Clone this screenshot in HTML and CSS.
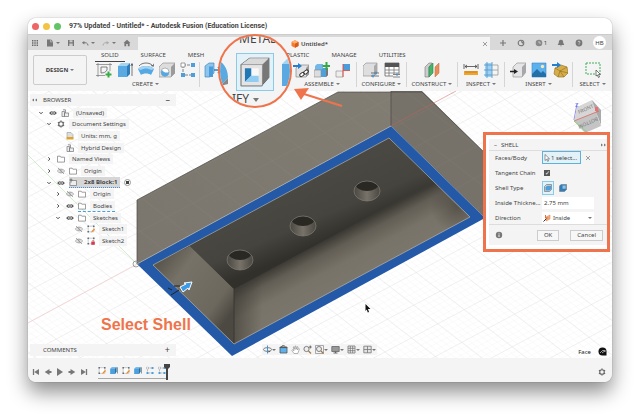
FILE: index.html
```html
<!DOCTYPE html>
<html lang="en">
<head>
  <meta charset="UTF-8">
  <meta name="viewport" content="width=device-width, initial-scale=1.0">
  <title>Autodesk Fusion</title>
  <link rel="stylesheet" href="styles.css">
</head>
<body>
  <!-- icon sprite -->
  <svg class="sprite" aria-hidden="true">
    <symbol id="apps" viewBox="0 0 8 8"><path d="M1 1h1.400v1.400H1zM3.300 1h1.400v1.400H3.300zM5.600 1H7v1.400H5.600zM1 3.300h1.400v1.400H1zM3.300 3.300h1.400v1.400H3.300zM5.600 3.300H7v1.400H5.600zM1 5.600h1.400V7H1zM3.300 5.600h1.400V7H3.300zM5.600 5.600H7V7H5.600z" fill="#666"/></symbol>
    <symbol id="file" viewBox="0 0 8 8"><path d="M1 .5h4l2 2v5H1z" fill="#777"/><path d="M4.6.8v2.1h2" fill="none" stroke="#ddd" stroke-width=".6"/></symbol>
    <symbol id="save" viewBox="0 0 8 8"><path d="M1 1h6v6H1z" fill="#777"/><path d="M2.5 1.2h3v2h-3zM2.3 4.6h3.4V7H2.3z" fill="#ccc"/></symbol>
    <symbol id="undo" viewBox="0 0 8 8"><path d="M7 6.5C7 4 5 3.5 2 3.7" fill="none" stroke="#777"/><path d="M.8 3.8 3.4 2v3.5z" fill="#777"/></symbol>
    <symbol id="redo" viewBox="0 0 8 8"><path d="M1 6.5C1 4 3 3.5 6 3.7" fill="none" stroke="#aaa"/><path d="M7.2 3.8 4.6 2v3.5z" fill="#aaa"/></symbol>
    <symbol id="home" viewBox="0 0 8 8"><path d="M4 .8 7.5 4H6.6v3.2H4.8V5H3.2v2.2H1.4V4H.5z" fill="#777"/></symbol>
    <symbol id="doc" viewBox="0 0 8 8"><path d="M4 .3 7.5 2v4L4 7.8.5 6V2z" fill="#f47b2c"/><path d="M4 .3 7.5 2 4 3.8.5 2z" fill="#ffb071"/><path d="M4 3.8V7.8l3.5-1.8V2z" fill="#d8591b"/></symbol>
    <symbol id="close" viewBox="0 0 8 8"><path d="M2 2l4 4M6 2 2 6" stroke="#777" stroke-width=".7"/></symbol>
    <symbol id="plus" viewBox="0 0 8 8"><path d="M4 1v6M1 4h6" stroke="#777" stroke-width="1.2"/></symbol>
    <symbol id="ext" viewBox="0 0 8 8"><circle cx="4" cy="4" r="2.8" fill="none" stroke="#777" stroke-width="1.1"/><path d="M3.5 1.5 6 3v2L4.5 3.6z" fill="#777"/></symbol>
    <symbol id="clock" viewBox="0 0 8 8"><circle cx="4" cy="4" r="3.3" fill="#888"/><path d="M4 2v2h2" fill="none" stroke="#ddd" stroke-width=".7"/></symbol>
    <symbol id="bell" viewBox="0 0 8 8"><path d="M4 .7c2 0 2.2 1.5 2.2 3L7.3 6H.7l1.1-2.3c0-1.500.2-3 2.2-3z" fill="#777"/><path d="M3 6.500h2L4 7.500z" fill="#777"/></symbol>
    <symbol id="help" viewBox="0 0 8 8"><circle cx="4" cy="4" r="3.4" fill="#777"/><path d="M3 3.2c0-1.500 2-1.300 2 0 0 .7-1 .7-1 1.500M4 5.400v.7" fill="none" stroke="#ddd" stroke-width=".8"/></symbol>

    <symbol id="sketch" viewBox="0 0 16 16"><path d="M2 1v14M14 1v8M0 2.500h16M0 13.500h9" stroke="#777" stroke-width=".7"/><path d="M5 5v6c3 0 5-1 6-3V5z" fill="none" stroke="#666" stroke-width=".8"/><path d="M12.500 9.500v6M9.500 12.500h6" stroke="#3aaa48" stroke-width="2"/></symbol>
    <symbol id="extrude" viewBox="0 0 16 16"><path d="M1 4 4 1h9l-3 3z" fill="#a5d3f2"/><path d="M1 4h9v11H1z" fill="#5aa9e0"/><path d="m10 4 3-3v11l-3 3z" fill="#2f7dbb"/><path d="M15 14V2m-1.200 2L15 1.500 16 4" stroke="#444" stroke-width=".7" fill="none"/></symbol>
    <symbol id="revolve" viewBox="0 0 16 16"><path d="M0 7c3-4 13-4 16 0l-3 6c-2-2-8-2-10 0z" fill="#56a8e2"/><path d="M0 7c3-4 13-4 16 0l-3 1c-3-2-7-2-10 0z" fill="#a5d3f2"/><path d="M1 4c3-4 11-4 14 0M13 3.500l2.500.8.200-2.500" fill="none" stroke="#555" stroke-width=".8"/></symbol>
    <symbol id="hole" viewBox="0 0 16 16"><path d="M0 5 4 1h12v10l-4 4H0z" fill="#ddd" stroke="#888" stroke-width=".6"/><path d="m12 5 4-4v10l-4 4z" fill="#9b9b9b"/><circle cx="6" cy="10" r="4" fill="#fff" stroke="#888" stroke-width=".6"/><path d="M3 8a4 4 0 1 0 7 2c-2 1-5 1-7-2z" fill="#56a8e2"/></symbol>
    <symbol id="pattern" viewBox="0 0 16 16"><path d="M3 3h10M3 3v10h10" fill="none" stroke="#666" stroke-width=".8" stroke-dasharray="3 1"/><path d="M11 1h4v4h-4zM1 11h4v4H1zM11 11h4v4h-4z" fill="#4aa0df"/><path d="M1 1h4v4H1z" fill="#fff" stroke="#777" stroke-width=".7"/></symbol>
    <symbol id="presspull" viewBox="0 0 16 16"><path d="M1 4 5 1h5v10l-4 4H1z" fill="#8dc5ec" stroke="#2f7dbb" stroke-width=".6"/><path d="M5 4.500h4V15H5z" fill="#4a9dda"/><path d="M10 8h6m-2-3 2.500 3L14 11" fill="none" stroke="#2f7dbb" stroke-width="1.400"/></symbol>
    <symbol id="fillet" viewBox="0 0 16 16"><path d="M1 6 5 1c7 0 10 5 10 10l-4 4C11 10 7 6 1 6z" fill="#5aa9e0"/><path d="M1 6c6 0 10 4 10 9H1z" fill="#ddd"/><path d="m11 15 4-4v3z" fill="#888"/></symbol>
    <symbol id="shell" viewBox="0 0 32 32"><path d="M3 9 11 3h18v18l-7 8H3z" fill="#eee" stroke="#555" stroke-width="1"/><path d="M3 9 11 3h18l-6 6z" fill="#d9d9d9"/><path d="m23 9 6-6v18l-7 8z" fill="#777"/><path d="M3 9h20v20H3z" fill="#e4e4e4" stroke="#777" stroke-width=".6"/><path d="M6.500 12.500h13v13h-13z" fill="#f8f8f8"/><path d="M6.500 12.500h6v7l-6 6z" fill="#2277b5"/><path d="m12.500 19.500 7 0v6h-13z" fill="#91cdf2"/></symbol>
    <symbol id="insertc" viewBox="0 0 16 16"><path d="M3 6 6 3h10v9l-3 3H3z" fill="#e2e2e2" stroke="#777" stroke-width=".6"/><path d="m13 6 3-3v9l-3 3z" fill="#999"/><path d="M0 3h5V1l4 3-4 3V5H0z" fill="#257fd0"/><path d="M8 13.500 14 9" stroke="#fff" stroke-width="4"/><rect x="6.500" y="11" width="5" height="3" rx="1.500" fill="none" stroke="#333" transform="rotate(-35 9 12.500)"/><rect x="10.500" y="8.500" width="5" height="3" rx="1.500" fill="none" stroke="#333" transform="rotate(-35 13 10)"/></symbol>
    <symbol id="newcomp" viewBox="0 0 16 16"><path d="M1 4 3 2h6v6H1z" fill="#73b8e8"/><path d="M0 8h7v7H0z" fill="#ddd" stroke="#777" stroke-width=".5"/><path d="M7 8 9 6h5v7l-2 2H7z" fill="#4f9fd9"/><path d="m12 8 2-2v7l-2 2z" fill="#777"/><path d="M12.500 0v8M8.500 4h8" stroke="#37a847" stroke-width="2"/></symbol>
    <symbol id="joint" viewBox="0 0 16 16"><path d="M8 2h7v6H8z" fill="#4a9dda"/><path d="M1 9h7v6H1z" fill="#eee" stroke="#888" stroke-width=".6"/><path d="M8 15V2M8 8.500h7" stroke="#e04a3f" stroke-width=".9"/></symbol>
    <symbol id="config" viewBox="0 0 16 16"><path d="M0 4 3 1h11v10l-3 3H0z" fill="#dedede" stroke="#888" stroke-width=".6"/><path d="m11 4 3-3v10l-3 3z" fill="#aaa"/><path d="M8 11h8M8 14h8" stroke="#555" stroke-width=".8"/><path d="M13 9.500v3M10 12.500v3" stroke="#3f94d6" stroke-width="1.200"/></symbol>
    <symbol id="table" viewBox="0 0 16 16"><path d="M1 1h14v13H1z" fill="#fff" stroke="#666" stroke-width=".8"/><path d="M1 1h14v4H1z" fill="#555"/><path d="M1 8h14M1 11h14M5 5v9M10 5v9" stroke="#777" stroke-width=".8"/><path d="M9 12h7v4H9z" fill="#f4f4f4"/><path d="M9 12.500h7M9 15h7" stroke="#555" stroke-width=".7"/><path d="M13 11v3" stroke="#3f94d6"/></symbol>
    <symbol id="plane" viewBox="0 0 16 16"><path d="M1 5 5 1h3L5 5v10H1z" fill="#ccc" stroke="#777" stroke-width=".6"/><path d="m5 5 4-4v10l-4 4z" fill="#45b667" stroke="#2c8347" stroke-width=".6"/><path d="m11 5 4-4v10l-4 4z" fill="#e98d5b" stroke="#b9683c" stroke-width=".5"/></symbol>
    <symbol id="measure" viewBox="0 0 16 16"><path d="M1 2v5M15 2v5M2 4.500h12M4 3 2 4.500 4 6M12 3l2 1.500L12 6" fill="none" stroke="#444" stroke-width=".8"/><path d="M1 9h14v4H1z" fill="#f0a42d"/><path d="M3 9v2M5 9v2M7 9v2M9 9v2M11 9v2M13 9v2" stroke="#a76a0e" stroke-width=".6"/></symbol>
    <symbol id="interf" viewBox="0 0 16 16"><path d="M1 1h7v14H1z" fill="#9dd0f3"/><path d="M3 0v16M8 0v16M0 3h8M0 8h8M0 13h8" fill="none" stroke="#5a9bc9" stroke-width=".9"/><path d="M8 3h6v10H8M8 8h6" fill="none" stroke="#999" stroke-width=".8"/></symbol>
    <symbol id="derive" viewBox="0 0 16 16"><path d="M3 5 7 1h9v9l-4 5H3z" fill="#e5e5e8" stroke="#888" stroke-width=".6"/><path d="m12 5 4-4v9l-4 5z" fill="#a6a6ac"/><path d="M0 9.500h5" stroke="#222" stroke-width="1.500"/><path d="m4 7 4 2.500L4 12z" fill="#222"/></symbol>
    <symbol id="image" viewBox="0 0 16 16"><path d="M1 1h14v14H1z" fill="#5bb1ed" stroke="#3687c6" stroke-width=".6"/><path d="m1 12 5-5 4 4 2-2 3 3v3H1z" fill="#256fa8"/><circle cx="11.500" cy="4.500" r="1.700" fill="#ffe7b0"/></symbol>
    <symbol id="mesh" viewBox="0 0 16 16"><path d="m3 6 6-3 6 2 1 6-4 4H6l-4-3z" fill="#d6ae49" stroke="#8f6d1c" stroke-width=".6"/><path d="m3 6 5 3 7-4M8 9l-2 6M8 9l4 6M8 9l8 2" fill="none" stroke="#8f6d1c" stroke-width=".6"/><path d="M0 2h5V0l4 3-4 3V4H0z" fill="#257fd0"/></symbol>
    <symbol id="select" viewBox="0 0 16 16"><path d="M1 1h14v11H1z" fill="none" stroke="#45ad5d" stroke-dasharray="2 1"/><path d="m11 8 4.500 4.500h-2l1 2.500-1 .5-1.200-2.500-1.300 1z" fill="#fff" stroke="#444" stroke-width=".7"/></symbol>

    <symbol id="eye" viewBox="0 0 8 8"><path d="M.2 4C2 1.200 6 1.200 7.800 4 6 6.800 2 6.800.2 4z" fill="#555"/><circle cx="4" cy="4" r="1.400" fill="#555" stroke="#fff" stroke-width=".7"/></symbol>
    <symbol id="hidden" viewBox="0 0 8 8"><path d="M.3 4C2 1.500 6 1.500 7.700 4 6 6.500 2 6.500.3 4zM1 1l6 6" fill="none" stroke="#888" stroke-width=".7"/><circle cx="4" cy="4" r="1.200" fill="none" stroke="#888" stroke-width=".6"/></symbol>
    <symbol id="down" viewBox="0 0 8 8"><path d="m2.300 3 1.700 1.800L5.700 3" fill="none" stroke="#555"/></symbol>
    <symbol id="right" viewBox="0 0 8 8"><path d="m3.200 2.300 1.800 1.700-1.800 1.700" fill="none" stroke="#555"/></symbol>
    <symbol id="collapse" viewBox="0 0 8 8"><path d="M4 2.500v3L2 4zM7 2.500v3L5 4z" fill="#777"/></symbol>
    <symbol id="expand" viewBox="0 0 8 8"><path d="M2 2.500v3L4 4zM5 2.500v3L7 4z" fill="#777"/></symbol>
    <symbol id="folder" viewBox="0 0 8 8"><path d="M.5 1.200h2.700l.6 1h3.700v4.900h-7z" fill="#fff" stroke="#777" stroke-width=".7"/></symbol>
    <symbol id="gear" viewBox="0 0 8 8"><circle cx="4" cy="4" r="2.300" fill="none" stroke="#666" stroke-width="1.100"/><path d="M4 .4v1.200M4 6.400v1.200M.9 2.200l1 .6M6.100 5.200l1 .6M.9 5.800l1-.6M6.100 2.800l1-.6" stroke="#666" stroke-width="1.300"/></symbol>
    <symbol id="asm" viewBox="0 0 8 8"><path d="M1 2.500h2.500v5H1zM3.500 4h4v3.500h-4zM2 .8h2.500V4" fill="#eee" stroke="#777" stroke-width=".7"/></symbol>
    <symbol id="units" viewBox="0 0 8 8"><path d="M1 .5h4l2 2v3H1z" fill="#ddd" stroke="#888" stroke-width=".5"/><path d="M.5 5h7v2.500h-7z" fill="#dca42d"/></symbol>
    <symbol id="comp" viewBox="0 0 8 8"><path d="M2.500 2.500h5v5H1V4" fill="#eee" stroke="#777" stroke-width=".7"/><path d="M2 .5v4M.5 2h3" stroke="#555" stroke-width=".8"/></symbol>
    <symbol id="sk1" viewBox="0 0 8 8"><path d="M1.200 1.200h5.600v5.600H1.200z" fill="#fff" stroke="#999" stroke-width=".5"/><path d="M.5.5h1.400v1.400H.5zM6.100.5h1.400v1.400H6.100zM.5 6.100h1.400v1.400H.5z" fill="#57656f"/><path d="m4.300 7.500.5-1.700 2.400-2.300.8.900-2.300 2.400z" fill="#f28a26"/></symbol>
    <symbol id="sk2" viewBox="0 0 8 8"><path d="M1.200 1.200h5.600v5.600H1.200z" fill="#fff" stroke="#999" stroke-width=".5"/><path d="M.5.5h1.400v1.400H.5zM6.100.5h1.400v1.400H6.100zM.5 6.100h1.400v1.400H.5z" fill="#57656f"/><path d="M4.300 4.800h3.500v3H4.300z" fill="#d33b4b"/><path d="M5 4.800c0-1.800 2-1.800 2 0" fill="none" stroke="#d33b4b" stroke-width=".7"/></symbol>
    <symbol id="box" viewBox="0 0 8 8"><path d="m.3 2.200 1.500-1.700h4.700v4.800L5 7.500H.3z" fill="#7cbdeb"/><path d="M.3 2.200H5v5.300H.3z" fill="#4c9fdc"/><path d="m5 2.200 1.500-1.700v4.800L5 7.500z" fill="#27709f"/><path d="M7.500.8V7" stroke="#555" stroke-width=".6"/></symbol>
    <symbol id="sharp" viewBox="0 0 8 8"><path d="m.5 2.500 2-2h5v5l-2 2h-5z" fill="#d4d4d4" stroke="#666" stroke-width=".6"/><path d="m1.500 3.200 1.500-1.500h4v3.500L5.500 6.500h-4z" fill="#4c9fdc"/></symbol>
    <symbol id="round" viewBox="0 0 8 8"><path d="M.5 2.500C1 .8 2 .5 3 .5h4.500v5l-2 2h-5z" fill="#2f7dbb" stroke="#777" stroke-width=".6"/><path d="M3.500 1.500h3.200v3.200H3.500z" fill="#8dc5ec"/></symbol>
    <symbol id="info" viewBox="0 0 8 8"><circle cx="4" cy="4" r="3.200" fill="#777"/><path d="M4 3.500V6M4 1.900v.8" stroke="#fff" stroke-width=".9"/></symbol>
    <symbol id="cursor" viewBox="0 0 8 8"><path d="m2 .5 4.500 4.300H4.600L5.600 7l-1 .4-.9-2.200L2 6.500z" fill="#fff" stroke="#555" stroke-width=".6"/></symbol>
    <symbol id="inside" viewBox="0 0 8 8"><path d="M3 3 7 1v4L3 7z" fill="#f2b28b" stroke="#d9783f" stroke-width=".5"/><path d="m.5 7.500 3-3" stroke="#333"/><path d="M2.500 1v3h3" stroke="#e0703a" fill="none"/></symbol>

    <symbol id="orbit" viewBox="0 0 9 9"><ellipse cx="4.500" cy="4.500" rx="4" ry="1.900" fill="none" stroke="#666" stroke-width=".8"/><path d="M4.500.5v8" stroke="#3f94d6"/><path d="m5.500 5.500 2 1-2 1z" fill="#555"/></symbol>
    <symbol id="look" viewBox="0 0 9 9"><path d="M1 2h7v6H1z" fill="#5db2ee" stroke="#555" stroke-width=".8"/><path d="M2.500 2c0-1.800 3-1.800 4 0M.8 2.600h7.400" stroke="#555" fill="none"/></symbol>
    <symbol id="hand" viewBox="0 0 9 9"><path d="M3 8.500.8 5.300l.7-.6L3 5.800 2.200 2l.8-.2 1 2.600V1h.9l.3 3.300L6.200 1.600l.8.300-.5 3 1.200-1.500.7.500L6.800 8.500z" fill="#fff" stroke="#888" stroke-width=".6"/></symbol>
    <symbol id="zoom" viewBox="0 0 9 9"><circle cx="3.500" cy="4" r="2.600" fill="#eee" stroke="#666" stroke-width=".8"/><path d="m5.500 6 2.500 2.500" stroke="#a87640" stroke-width="1.200"/><path d="M7.300.5v3M5.800 2h3" stroke="#444" stroke-width=".7"/></symbol>
    <symbol id="fit" viewBox="0 0 9 9"><path d="M.5.500h8v8h-8z" fill="none" stroke="#888" stroke-width=".7"/><circle cx="4" cy="4" r="2.500" fill="#eee" stroke="#666" stroke-width=".8"/><path d="M6 6l2.500 2.500" stroke="#a87640" stroke-width="1.200"/></symbol>
    <symbol id="screen" viewBox="0 0 9 9"><path d="M.8 1.500h7.400v5H.8z" fill="#999" stroke="#666" stroke-width=".8"/><path d="M4.500 6.500V8M2.500 8h4" stroke="#666"/></symbol>
    <symbol id="grid" viewBox="0 0 9 9"><path d="M1 1h7v7H1zM1 3.300h7M1 5.700h7M3.300 1v7M5.700 1v7" fill="none" stroke="#777" stroke-width=".8"/></symbol>
    <symbol id="views" viewBox="0 0 9 9"><path d="M.8 1.200h7.400v6.600H.8zM.8 4.500h7.400M4.500 1.200v6.600" fill="#e4e4e4" stroke="#777" stroke-width=".8"/></symbol>

    <symbol id="first" viewBox="0 0 8 8"><path d="M1.500 1v6" stroke="#777" stroke-width="1.300"/><path d="M7 1v6L2.200 4z" fill="#777"/></symbol>
    <symbol id="prev" viewBox="0 0 8 8"><path d="M5.500 1v6L.7 4z" fill="#777"/><path d="M5 4h2.500" stroke="#777" stroke-width="2"/></symbol>
    <symbol id="play" viewBox="0 0 8 8"><path d="M1 0v8l6-4z" fill="#777"/></symbol>
    <symbol id="next" viewBox="0 0 8 8"><path d="M2.500 1v6l4.800-3z" fill="#777"/><path d="M3 4H.5" stroke="#777" stroke-width="2"/></symbol>
    <symbol id="last" viewBox="0 0 8 8"><path d="M6.500 1v6" stroke="#777" stroke-width="1.300"/><path d="M1 1v6l4.800-3z" fill="#777"/></symbol>
  </svg>

  <div class="window">
    <header class="titlebar">
      <span class="light red"></span><span class="light yellow"></span><span class="light green"></span>
      <h1 class="title">97% Updated - Untitled* - Autodesk Fusion (Education License)</h1>
    </header>

    <div class="tabbar">
      <div class="quick">
        <button class="ico" aria-label="Data panel"><svg><use href="#apps"/></svg></button>
        <button class="ico menu" aria-label="File"><svg><use href="#file"/></svg></button>
        <button class="ico" aria-label="Save"><svg><use href="#save"/></svg></button>
        <button class="ico menu" aria-label="Undo"><svg><use href="#undo"/></svg></button>
        <button class="ico menu" aria-label="Redo"><svg><use href="#redo"/></svg></button>
        <button class="ico" aria-label="Home"><svg><use href="#home"/></svg></button>
      </div>
      <div class="doctab">
        <span class="docname"><svg class="i8"><use href="#doc"/></svg>Untitled*</span>
        <button class="ico" aria-label="Close tab"><svg><use href="#close"/></svg></button>
      </div>
      <div class="account">
        <button class="ico" aria-label="New design"><svg><use href="#plus"/></svg></button>
        <button class="ico" aria-label="Extensions"><svg><use href="#ext"/></svg></button>
        <button class="ico jobs"><svg><use href="#clock"/></svg>1</button>
        <button class="ico" aria-label="Notifications"><svg><use href="#bell"/></svg></button>
        <button class="ico" aria-label="Help"><svg><use href="#help"/></svg></button>
        <button class="avatar">HB</button>
      </div>
    </div>

    <div class="ribbon">
      <button class="workspace menu">DESIGN</button>
      <div class="tools">
        <nav class="modes">
          <a href="#" class="active">SOLID</a>
          <a href="#">SURFACE</a>
          <a href="#">MESH</a>
          <a href="#">SHEET METAL</a>
          <a href="#">PLASTIC</a>
          <a href="#">MANAGE</a>
          <a href="#">UTILITIES</a>
        </nav>
        <div class="groups">
          <div class="group">
            <div class="icons"><svg><use href="#sketch"/></svg><svg><use href="#extrude"/></svg><svg><use href="#revolve"/></svg><svg><use href="#hole"/></svg><svg><use href="#pattern"/></svg></div>
            <button class="menu">CREATE</button>
          </div>
          <div class="group">
            <div class="icons"><svg><use href="#presspull"/></svg><svg><use href="#fillet"/></svg><svg><use href="#shell"/></svg><svg><use href="#extrude"/></svg></div>
            <button class="menu">MODIFY</button>
          </div>
          <div class="group">
            <div class="icons"><svg><use href="#insertc"/></svg><svg><use href="#newcomp"/></svg><svg><use href="#joint"/></svg></div>
            <button class="menu">ASSEMBLE</button>
          </div>
          <div class="group">
            <div class="icons"><svg><use href="#config"/></svg><svg><use href="#table"/></svg></div>
            <button class="menu">CONFIGURE</button>
          </div>
          <div class="group">
            <div class="icons"><svg><use href="#plane"/></svg></div>
            <button class="menu">CONSTRUCT</button>
          </div>
          <div class="group">
            <div class="icons"><svg><use href="#measure"/></svg><svg><use href="#interf"/></svg></div>
            <button class="menu">INSPECT</button>
          </div>
          <div class="group">
            <div class="icons"><svg><use href="#derive"/></svg><svg><use href="#image"/></svg><svg><use href="#mesh"/></svg></div>
            <button class="menu">INSERT</button>
          </div>
          <div class="group">
            <div class="icons"><svg><use href="#select"/></svg></div>
            <button class="menu">SELECT</button>
          </div>
        </div>
      </div>
    </div>

    <main class="viewport">
      <svg class="canvas" viewBox="28 91 584 267" preserveAspectRatio="xMidYMid slice">
        <defs>
          <pattern id="minor" width="6" height="6" patternUnits="userSpaceOnUse" patternTransform="matrix(.88 -.47 .8 .62 137 264)"><path d="M0 0h6M0 0v6" stroke="#ececec" stroke-width=".5"/></pattern>
          <pattern id="major" width="30" height="30" patternUnits="userSpaceOnUse" patternTransform="matrix(.88 -.47 .8 .62 137 264)"><path d="M0 0h30M0 0v30" stroke="#c9c9c9" stroke-width=".8"/></pattern>
          <linearGradient id="wall" x1="0" y1="1" x2="1" y2="0"><stop offset="0" stop-color="#7b766d"/><stop offset="1" stop-color="#817d73"/></linearGradient>
          <linearGradient id="floor" gradientUnits="userSpaceOnUse" x1="290" y1="190" x2="314" y2="246"><stop offset="0" stop-color="#4a4842"/><stop offset=".6" stop-color="#46443e"/><stop offset="1" stop-color="#32302b"/></linearGradient>
          <linearGradient id="near" gradientUnits="userSpaceOnUse" x1="334" y1="236" x2="356" y2="278"><stop offset="0" stop-color="#3c3a34"/><stop offset=".25" stop-color="#625e55"/><stop offset=".6" stop-color="#787368"/><stop offset="1" stop-color="#7b766b"/></linearGradient>
          <linearGradient id="side" gradientUnits="userSpaceOnUse" x1="160" y1="255" x2="234" y2="310"><stop offset="0" stop-color="#55524a"/><stop offset=".3" stop-color="#777267"/><stop offset=".8" stop-color="#6d685e"/><stop offset="1" stop-color="#4c4942"/></linearGradient>
          <linearGradient id="corner" gradientUnits="userSpaceOnUse" x1="234" y1="310" x2="262" y2="310"><stop offset="0" stop-color="#3c3a34" stop-opacity=".6"/><stop offset="1" stop-color="#3c3a34" stop-opacity="0"/></linearGradient>
          <radialGradient id="dim" gradientUnits="userSpaceOnUse" cx="458" cy="205" r="28"><stop offset="0" stop-color="#3c3a34" stop-opacity=".6"/><stop offset="1" stop-color="#3c3a34" stop-opacity="0"/></radialGradient>
          <linearGradient id="bore" x1="0" y1="0" x2="1" y2="0"><stop offset="0" stop-color="#4a4741"/><stop offset=".5" stop-color="#77736a"/><stop offset="1" stop-color="#4a4741"/></linearGradient>
          <clipPath id="rim"><ellipse rx="13" ry="10"/></clipPath>
          <g id="stud">
            <ellipse rx="13" ry="10" fill="url(#bore)"/>
            <g clip-path="url(#rim)"><ellipse cy="-8" rx="12" ry="8" fill="#2a2823"/></g>
            <ellipse rx="13" ry="10" fill="none" stroke="#8a867c" stroke-width=".6"/>
          </g>
        </defs>
        <path d="M28 91h584v267H28z" fill="#fff"/>
        <path d="M28 91h584v267H28z" fill="url(#minor)"/>
        <path d="M28 91h584v267H28z" fill="url(#major)" opacity=".5"/>
        <path d="M28 155 137 264" stroke="#bce8bc" stroke-width=".7"/>
        <path d="M28 323 137 264" stroke="#f6cccc" stroke-width=".7"/>
        <!-- outer walls -->
        <path d="M137 200 338 92l53 0v34L137 264z" fill="url(#wall)"/>
        <path d="M391 91h31l64 63v65l-95-93z" fill="#76726a"/>
        <path d="M137 264V200L338 92h84l64 62v64z" fill="url(#major)" opacity=".1"/>
        <path d="M137 264V200L338 92h84l64 62M391 91v35" fill="none" stroke="#4b4943" stroke-width=".7"/>
        <path d="M391 126 456 91" stroke="#c9605a" stroke-opacity=".7" stroke-width=".7"/>
        <!-- selected rim and cavity -->
        <path d="M137 264 391 126l94 92-253 138z" fill="#2459a8"/>
        <path d="M137 264 391 126" stroke="#b9b3a6" stroke-width=".7"/>
        <path d="M153 265 389 138l81 79-236 127z" fill="url(#near)"/>
        <path d="M234 289 300 253v56l-66 35z" fill="url(#corner)"/>
        <path d="M433 182 470 217 430 238 400 200z" fill="url(#dim)"/>
        <path d="M153 265 190 246l44 43v55z" fill="url(#side)"/>
        <path d="M190 246 389 138l44 44-199 107z" fill="url(#floor)"/>
        <path d="M234 289v55" stroke="#34322d" stroke-width=".8"/>
        <path d="M153 265 389 138l81 79-236 127z" fill="none" stroke="#b9b3a6" stroke-width=".7"/>
        <use href="#stud" x="240" y="260"/>
        <use href="#stud" x="303" y="226"/>
        <use href="#stud" x="367" y="191"/>
        <circle cx="136" cy="264" r="3" fill="none" stroke="#888" stroke-width=".8"/>
        <path d="m168 288 4 2M171 295l8-5M174 286h6" stroke="#222" stroke-width="1"/>
        <path d="m180 287 6-3-2-1 8-1-3 8-1-2-5 4z" fill="#3b9be8" stroke="#fff" stroke-width="1"/>
        <path d="m365.500 304 5 5h-2.500l1 3-1.200.5-1-3-1.300 1.500z" fill="#111"/>
        <!-- view cube -->
        <g>
          <path d="M574 120 577 104" stroke="#6b6bec" stroke-width=".8"/>
          <path d="m577 107 15-7 9 12-27 9z" fill="#d6d6d6"/>
          <path d="m574 121 22-9 5 14-16 7z" fill="#c4c4c4"/>
          <path d="m592 100 9 10v15l-5-13z" fill="#aaa"/>
          <path d="m574 121 25-10" stroke="#e05a50" stroke-width=".7"/>
          <path d="m574 121 14 12" stroke="#74cf74" stroke-width=".8"/>
          <text x="579" y="114" class="cube" transform="rotate(-24 579 114)">FRONT</text>
          <text x="597" y="117" class="cube" transform="rotate(156 597 117)">BOTTOM</text>
          <text x="575" y="107" class="axis">Z</text>
          <path d="M595 107h3v4h-3z" fill="#e87070"/>
        </g>
        <text x="101" y="330" class="caption">Select Shell</text>
      </svg>

      <aside class="left">
        <section>
          <h2 class="bar"><svg class="i8"><use href="#collapse"/></svg>BROWSER<span class="end">–</span></h2>
          <ul class="tree">
            <li><svg><use href="#down"/></svg><svg><use href="#eye"/></svg><svg><use href="#asm"/></svg><span>(Unsaved)</span></li>
            <li class="l1"><svg><use href="#down"/></svg><svg><use href="#gear"/></svg><span>Document Settings</span></li>
            <li class="l2"><svg></svg><svg><use href="#units"/></svg><span>Units: mm, g</span></li>
            <li class="l2"><svg></svg><svg><use href="#asm"/></svg><span>Hybrid Design</span></li>
            <li class="l1"><svg><use href="#right"/></svg><svg><use href="#folder"/></svg><span>Named Views</span></li>
            <li class="l1"><svg><use href="#right"/></svg><svg><use href="#hidden"/></svg><svg><use href="#folder"/></svg><span>Origin</span></li>
            <li class="l1"><svg><use href="#down"/></svg><svg><use href="#eye"/></svg><b class="current"><svg><use href="#comp"/></svg><span>2x8 Block:1</span></b><input type="radio" checked aria-label="Activate component"></li>
            <li class="l2"><svg><use href="#right"/></svg><svg><use href="#hidden"/></svg><svg><use href="#folder"/></svg><span>Origin</span></li>
            <li class="l2"><svg><use href="#right"/></svg><svg><use href="#eye"/></svg><b class="marked"><svg><use href="#folder"/></svg><span>Bodies</span></b></li>
            <li class="l2"><svg><use href="#down"/></svg><svg><use href="#eye"/></svg><svg><use href="#folder"/></svg><span>Sketches</span></li>
            <li class="l3"><svg></svg><svg><use href="#hidden"/></svg><svg><use href="#sk1"/></svg><span>Sketch1</span></li>
            <li class="l3"><svg></svg><svg><use href="#hidden"/></svg><svg><use href="#sk2"/></svg><span>Sketch2</span></li>
          </ul>
        </section>
        <h2 class="bar comments">COMMENTS<span class="end">+</span></h2>
      </aside>

      <div class="navbar">
        <button class="menu" aria-label="Orbit"><svg><use href="#orbit"/></svg></button>
        <button aria-label="Look at"><svg><use href="#look"/></svg></button>
        <button aria-label="Pan"><svg><use href="#hand"/></svg></button>
        <button aria-label="Zoom"><svg><use href="#zoom"/></svg></button>
        <button class="menu" aria-label="Fit"><svg><use href="#fit"/></svg></button>
        <button class="menu" aria-label="Display settings"><svg><use href="#screen"/></svg></button>
        <button class="menu" aria-label="Grid and snaps"><svg><use href="#grid"/></svg></button>
        <button class="menu" aria-label="Viewports"><svg><use href="#views"/></svg></button>
      </div>

      <div class="status">
        Face
        <svg viewBox="0 0 9 9"><path d="M4.500.5a4 4 0 1 0 0 8h4v-4a4 4 0 0 0-4-4z" fill="#111"/><path d="m2 6 2.500-2.500h3M4 6l2-1.500h1.500" fill="none" stroke="#fff" stroke-width=".6"/></svg>
      </div>

      <form class="dialog">
        <div class="panel">
          <h2 class="dialogtitle"><span>–</span>SHELL<svg class="i8 end"><use href="#expand"/></svg></h2>
          <div class="fields">
            <label for="faces">Faces/Body</label>
            <div class="field">
              <button type="button" id="faces" class="pick"><svg class="i8"><use href="#cursor"/></svg>1 select...</button>
              <button type="button" class="clear" aria-label="Clear selection"><svg class="i8"><use href="#close"/></svg></button>
            </div>
            <label for="tangent">Tangent Chain</label>
            <div class="field"><input type="checkbox" id="tangent" checked></div>
            <span>Shell Type</span>
            <div class="field">
              <button type="button" class="type on" aria-label="Sharp offset"><svg class="i8"><use href="#sharp"/></svg></button>
              <button type="button" class="type" aria-label="Rounded offset"><svg class="i8"><use href="#round"/></svg></button>
            </div>
            <label for="thick">Inside Thickne...</label>
            <input type="text" id="thick" value="2.75 mm">
            <label for="dir">Direction</label>
            <div class="dropdown menu"><svg class="i8"><use href="#inside"/></svg><select id="dir"><option>Inside</option><option>Outside</option><option>Both</option></select></div>
          </div>
          <div class="actions">
            <svg class="i8"><use href="#info"/></svg>
            <button type="button">OK</button>
            <button type="button">Cancel</button>
          </div>
        </div>
      </form>
    </main>

    <footer class="timeline">
      <div class="playback">
        <button class="ico" aria-label="Start"><svg><use href="#first"/></svg></button>
        <button class="ico" aria-label="Back"><svg><use href="#prev"/></svg></button>
        <button class="ico" aria-label="Play"><svg><use href="#play"/></svg></button>
        <button class="ico" aria-label="Forward"><svg><use href="#next"/></svg></button>
        <button class="ico" aria-label="End"><svg><use href="#last"/></svg></button>
      </div>
      <div class="features">
        <svg><use href="#sk1"/></svg><svg><use href="#box"/></svg><svg><use href="#sk1"/></svg><svg><use href="#box"/></svg><svg viewBox="0 0 16 16"><use href="#pattern"/></svg><svg viewBox="0 0 16 16"><use href="#pattern"/></svg>
      </div>
      <svg class="marker" viewBox="0 0 6 16"><path d="M0 0h6v3L4 5v11H2V5L0 3z" fill="#444"/></svg>
      <button class="ico settings" aria-label="Settings"><svg><use href="#gear"/></svg></button>
    </footer>

    <!-- magnified ribbon button with its pointer -->
    <div class="lens">
      <div class="lenslabel">METAL</div>
      <div class="lensicons">
        <svg><use href="#fillet"/></svg>
        <svg class="picked"><use href="#shell"/></svg>
        <svg><use href="#extrude"/></svg>
      </div>
      <div class="lenslabel bottom menu">IFY</div>
    </div>
    <svg class="pointer" viewBox="0 0 50 20"><path d="m10 6 38 12" stroke="#ef744b" stroke-width="2"/><path d="M0 1 15 0 7 12z" fill="#ef744b"/></svg>
  </div>
</body>
</html>
```
FILE: styles.css
```css
*{ box-sizing: border-box;}
body{ margin: 0; padding: 18px 28px 37px; height: 100vh; overflow: hidden; background: #fff; color: #444;
font: 6px/8px "Noto Sans", "Open Sans", sans-serif;}
button, input, select{ font: inherit; color: inherit; border: 0; margin: 0; padding: 0; background: none;}
h1, h2, ul{ margin: 0; padding: 0; font-size: 6px; font-weight: normal; list-style: none;}
a{ color: inherit; text-decoration: none;}
svg{ display: block; flex: none;}
.sprite{ position: absolute; width: 0; height: 0;}
.i8, .ico svg{ width: 8px; height: 8px;}
.ico{ display: flex; align-items: center;}
.end{ margin-left: auto;}
.menu::after{ content: ""; flex: none; display: inline-block; margin-left: 2px; vertical-align: 1px; border: 2px solid transparent; border-top-color: #777; border-bottom: 0;}

.window{ position: relative; display: flex; flex-direction: column; height: 100%; border-radius: 8px; background: #f4f4f4;
box-shadow: 0 0 1px rgba(0,0,0,.5), 0 10px 20px rgba(0,0,0,.45);}

.titlebar{ display: flex; align-items: center; gap: 4px; height: 17px; padding-left: 4px; background: #fff; border-bottom: 1px solid #ccc; border-radius: 8px 8px 0 0;}
.light{ width: 7px; height: 7px; border-radius: 50%;}
.red{ background: #ec6765;}
.yellow{ background: #f3c444;}
.green{ background: #62c462;}
.title{ margin-left: 4px; font: bold 7px/8px Roboto, "Noto Sans", sans-serif;}

.tabbar{ display: flex; height: 15px; background: #d9d9d9;}
.quick{ display: flex; align-items: center; justify-content: space-between; width: 110px; padding: 0 7px 0 3px;}
.doctab{ flex: 1; display: flex; align-items: center; margin-top: 2px; padding-right: 1px; background: #f4f4f4;}
.docname{ flex: 1; display: flex; align-items: center; justify-content: center; gap: 2px; font-weight: 600;}
.account{ display: flex; align-items: center; justify-content: space-between; width: 122px; padding: 0 6px 0 9px;}
.jobs{ gap: 1px;}
.avatar{ width: 13px; height: 13px; border-radius: 50%; background: #fff; text-align: center;}

.ribbon{ display: flex; height: 41px; background: #f4f4f4;}
.workspace{ width: 54px; height: 30px; margin: 5px 5px 0; border: 1px solid #ccc; border-radius: 2px; font-weight: bold;}
.tools{ flex: 1; display: flex; flex-direction: column;}
.modes{ display: flex; gap: 10px; padding-left: 3px;}
.modes a{ height: 12px; padding: 0 6px; line-height: 11px;}
.active{ border-bottom: 1px solid #444;}
.groups{ flex: 1; display: grid; grid-template-columns: 107fr 88fr 69fr 50fr 51fr 47fr 68fr 40fr;}
.group{ display: flex; flex-direction: column; align-items: center; border-left: 1px solid #f4f4f4; border-image: linear-gradient(#d5d5d5 85%, transparent 85%) 1;}
.group:first-child{ border: 0;}
.icons{ display: flex; gap: 5px;}
.icons svg{ width: 16px; height: 16px;}
.group button{ margin-top: 1px; line-height: 10px; white-space: nowrap;}

.viewport{ flex: 1; position: relative; display: flex; min-height: 0; overflow: hidden;}
.canvas{ position: absolute; width: 100%; height: 100%;}
.caption{ font: bold 16px "Liberation Sans", Arial, sans-serif; fill: #ef744b;}
.cube{ font-size: 5px; fill: #777;}
.axis{ font-size: 6px; fill: #6b6bec;}

.left{ position: relative; display: flex; flex-direction: column; justify-content: space-between; width: 148px; padding: 3px 0 2px 2px;}
.bar{ display: flex; align-items: center; height: 12px; padding: 0 6px 0 0; background: #f4f4f4;}
.bar svg{ margin-right: 5px;}
.bar .end{ font-size: 9px;}
.comments{ padding-left: 13px;}
.tree{ display: grid; grid-auto-rows: 1fr; height: 140px; margin-top: 1px; padding-left: 7px;}
.tree li{ display: flex; align-items: center; gap: 4px;}
.tree svg{ width: 8px; height: 8px;}
.tree span{ padding: 0 3px; background: #f4f4f4; line-height: 10px;}
.tree .l1{ padding-left: 8px;}
.tree .l2{ padding-left: 17px;}
.tree .l3{ padding-left: 26px;}
.tree b{ display: flex; align-items: center; gap: 4px; font-weight: normal;}
.tree .current{ background: #d6d6d6; font-weight: bold; border-bottom: 1px dotted #4a90d9;}
.tree .current span{ background: none;}
.tree .marked{ border-bottom: 1px dashed #45a0dc;}
.tree input{ appearance: none; width: 7px; height: 7px; border: 1px solid #999; border-radius: 50%; background: radial-gradient(#444 40%, #fff 50%);}

.navbar{ position: absolute; left: 40%; bottom: 3px; display: flex; gap: 3px; padding: 1px; background: #f4f4f4;}
.navbar button{ display: flex; align-items: center;}
.navbar .menu::after{ margin-left: 0;}
.navbar svg{ width: 9px; height: 9px;}
.status{ position: absolute; right: 5px; bottom: 2px; display: flex; align-items: center; gap: 7px; color: #222;}
.status svg{ width: 9px; height: 9px;}

.dialog{ position: absolute; right: 2px; top: 41px; width: 127px; padding: 4px 0 4px 3px; border: 3px solid #ef744b; background: #fff;}
.panel{ background: #f4f4f4;}
.dialogtitle{ display: flex; align-items: center; gap: 4px; height: 12px; padding-left: 5px; border-bottom: 1px solid #ddd;}
.fields{ display: grid; grid-template-columns: 43px 1fr; grid-auto-rows: 13px; gap: 2px 4px; align-items: center; padding: 0 13px 0 6px; border-bottom: 1px solid #ddd; white-space: nowrap;}
.field{ display: flex; align-items: center; gap: 3px;}
.pick{ display: flex; align-items: center; height: 13px; width: 39px; border: 1px solid #5db2dc; background: #e3f1f8; white-space: nowrap;}
.type{ padding: 2px 1px; border: 1px solid transparent;}
.type.on{ border-color: #8ccbe8; background: #e3f1f8;}
.fields input[type=text]{ width: 100%; height: 12px; padding-left: 2px; background: #fff;}
.fields input[type=checkbox]{ appearance: none; position: relative; width: 6px; height: 6px; margin-left: 2px; background: #555;}
.fields input[type=checkbox]::after{ content: "✓"; position: absolute; inset: -1px 0 0; color: #fff; text-align: center;}
.dropdown{ display: flex; align-items: center; height: 12px; padding: 0 2px 0 1px; background: #fff;}
.dropdown select{ flex: 1; min-width: 0; appearance: none; padding-left: 2px;}
.actions{ display: flex; align-items: center; height: 20px; padding: 0 4px 0 6px;}
.actions button{ height: 11px; padding: 0 6px; border: 1px solid #ccc; line-height: 9px; background: #f7f7f7;}
.actions svg{ margin-right: auto;}
.actions button + button{ margin-left: 11px;}

.timeline{ display: flex; height: 24px; padding: 0 6px 0 4px; border-radius: 0 0 8px 8px; background: #f4f4f4;}
.playback{ display: flex; align-items: center; gap: 4px; margin-top: 3px;}
.features{ display: flex; gap: 4px; align-self: flex-start; margin: 8px 0 0 10px; padding-bottom: 3px; border-bottom: 1px solid #aaa;}
.features svg{ width: 8px; height: 9px;}
.marker{ width: 6px; height: 16px; margin: 6px 0 0 -2px;}
.settings{ margin: 3px 0 0 auto;}

.lens{ position: absolute; left: 190px; top: 16px; width: 74px; height: 74px; border: 2px solid #ef744b; border-radius: 50%; background: #f4f4f4; overflow: hidden;}
.lenslabel{ margin-top: -5px; padding-left: 19px; font-size: 12px; line-height: 16px;}
.lensicons{ display: flex; justify-content: center; align-items: center; gap: 6px; margin-top: 6px;}
.lensicons svg{ width: 32px; height: 32px;}
.lensicons .picked{ width: 38px; height: 38px; padding: 1px; border: 1px solid #8ccbe8; background: #e3f1f8;}
.lens .bottom{ margin-top: 0; padding-left: 12px;}
.lens .bottom::after{ border-width: 4px 3px 0; margin-left: 4px;}
.pointer{ position: absolute; left: 266px; top: 70px; width: 50px; height: 20px;}
```
